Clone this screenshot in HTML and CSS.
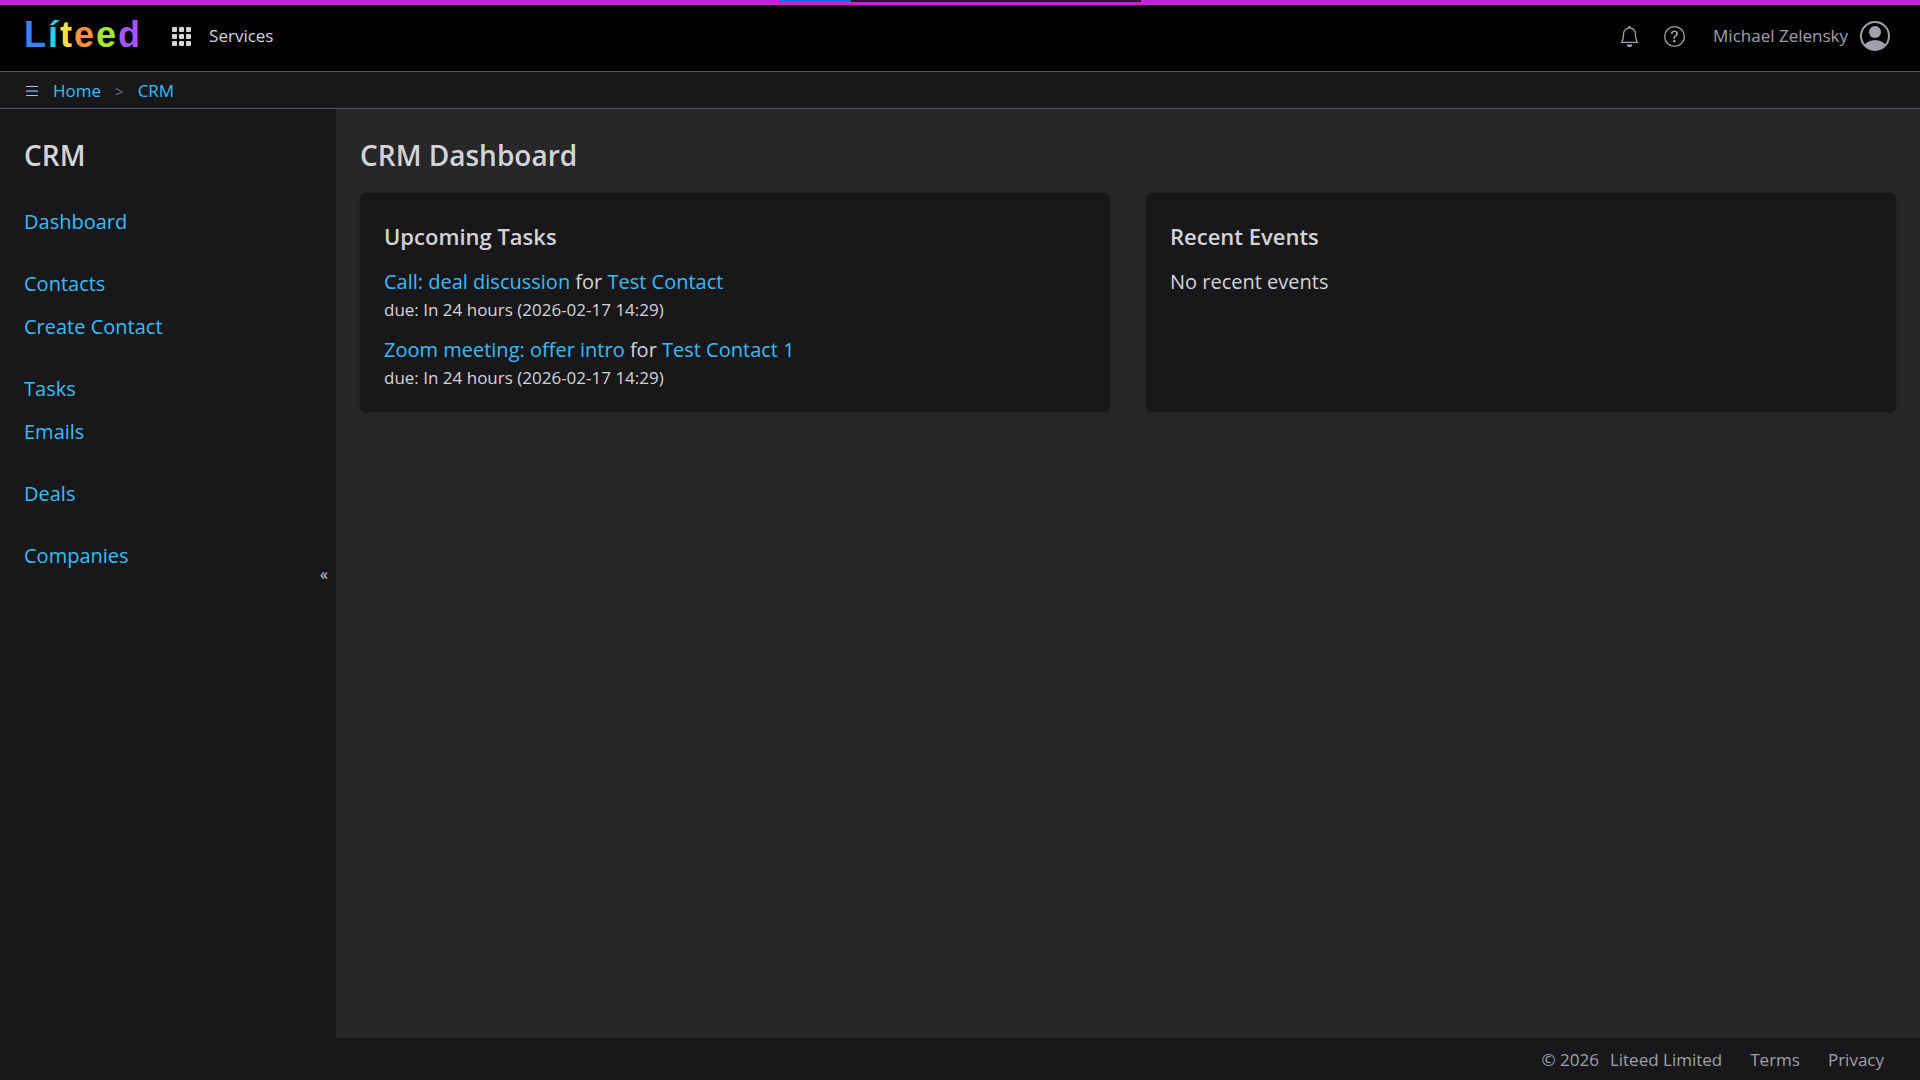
FILE: index.html
```html
<!DOCTYPE html>
<html lang="en">
<head>
    <meta charset="UTF-8">
    <meta name="viewport" content="width=device-width, initial-scale=1.0">
    <title>CRM Dashboard</title>
    <link rel="stylesheet" href="styles.css">
</head>
<body>
    <div class="progress"><span class="progress-done"></span></div>

    <header class="header">
        <a href="#" class="logo"><span class="c1">L</span><span class="c2">í</span><span class="c3">t</span><span class="c4">e</span><span class="c5">e</span><span class="c6">d</span></a>
        <a href="#" class="services">
            <svg width="19" height="19" viewBox="0 0 19 19" fill="currentColor">
                <rect x="0" y="0" width="5" height="5" rx="1"/>
                <rect x="7" y="0" width="5" height="5" rx="1"/>
                <rect x="14" y="0" width="5" height="5" rx="1"/>
                <rect x="0" y="7" width="5" height="5" rx="1"/>
                <rect x="7" y="7" width="5" height="5" rx="1"/>
                <rect x="14" y="7" width="5" height="5" rx="1"/>
                <rect x="0" y="14" width="5" height="5" rx="1"/>
                <rect x="7" y="14" width="5" height="5" rx="1"/>
                <rect x="14" y="14" width="5" height="5" rx="1"/>
            </svg>
            Services
        </a>
        <div class="header-right">
            <button type="button" class="icon-btn" aria-label="Notifications">
                <svg width="21" height="21" viewBox="0 0 16 16" fill="currentColor">
                    <path d="M8 16a2 2 0 0 0 2-2H6a2 2 0 0 0 2 2M8 1.918l-.797.161A4 4 0 0 0 4 6c0 .628-.134 2.197-.459 3.742-.16.767-.376 1.566-.663 2.258h10.244c-.287-.692-.502-1.49-.663-2.258C12.134 8.197 12 6.628 12 6a4 4 0 0 0-3.203-3.92zM14.22 12c.223.447.481.801.78 1H1c.299-.199.557-.553.78-1C2.68 10.2 3 6.88 3 6c0-2.42 1.72-4.44 4.005-4.901a1 1 0 1 1 1.99 0A5 5 0 0 1 13 6c0 .88.32 4.2 1.22 6"/>
                </svg>
            </button>
            <button type="button" class="icon-btn" aria-label="Help">
                <svg width="21" height="21" viewBox="0 0 16 16" fill="currentColor">
                    <path d="M8 15A7 7 0 1 1 8 1a7 7 0 0 1 0 14m0 1A8 8 0 1 0 8 0a8 8 0 0 0 0 16"/>
                    <path d="M5.255 5.786a.237.237 0 0 0 .241.247h.825c.138 0 .248-.113.266-.25.09-.656.54-1.134 1.342-1.134.686 0 1.314.343 1.314 1.168 0 .635-.374.927-.965 1.371-.673.489-1.206 1.06-1.168 1.987l.003.217a.25.25 0 0 0 .25.246h.811a.25.25 0 0 0 .25-.25v-.105c0-.718.273-.927 1.01-1.486.609-.463 1.244-.977 1.244-2.056 0-1.511-1.276-2.241-2.673-2.241-1.267 0-2.655.59-2.75 2.286m1.557 5.763c0 .533.425.927 1.01.927.609 0 1.028-.394 1.028-.927 0-.552-.42-.94-1.029-.94-.584 0-1.009.388-1.009.94"/>
                </svg>
            </button>
            <a href="#" class="user">
                Michael Zelensky
                <svg width="30" height="30" viewBox="0 0 30 30">
                    <clipPath id="face"><circle cx="15" cy="15" r="14"/></clipPath>
                    <circle cx="15" cy="15" r="14" fill="none" stroke="currentColor" stroke-width="2"/>
                    <circle cx="15" cy="11" r="6" fill="currentColor"/>
                    <ellipse cx="15" cy="28" rx="12" ry="9" fill="currentColor" clip-path="url(#face)"/>
                </svg>
            </a>
        </div>
    </header>

    <nav class="breadcrumbs">
        <button type="button" class="menu-btn" aria-label="Menu">
            <svg width="12" height="11" viewBox="0 0 12 11" fill="currentColor">
                <rect y="0" width="12" height="1"/>
                <rect y="4" width="12" height="2" opacity="0.6"/>
                <rect y="9" width="12" height="1"/>
            </svg>
        </button>
        <a href="#">Home</a>
        <span class="separator">&gt;</span>
        <a href="#">CRM</a>
    </nav>

    <div class="content">
        <aside class="sidebar">
            <h2>CRM</h2>
            <ul>
                <li><a href="#">Dashboard</a></li>
            </ul>
            <ul>
                <li><a href="#">Contacts</a></li>
                <li><a href="#">Create Contact</a></li>
            </ul>
            <ul>
                <li><a href="#">Tasks</a></li>
                <li><a href="#">Emails</a></li>
            </ul>
            <ul>
                <li><a href="#">Deals</a></li>
            </ul>
            <ul>
                <li><a href="#">Companies</a></li>
            </ul>
            <button type="button" class="collapse" aria-label="Collapse sidebar">«</button>
        </aside>

        <main class="main">
            <h1>CRM Dashboard</h1>
            <div class="cards">
                <section class="card">
                    <h3>Upcoming Tasks</h3>
                    <div class="task">
                        <p><a href="#">Call: deal discussion</a> for <a href="#">Test Contact</a></p>
                        <p class="due">due: In 24 hours (2026-02-17 14:29)</p>
                    </div>
                    <div class="task">
                        <p><a href="#">Zoom meeting: offer intro</a> for <a href="#">Test Contact 1</a></p>
                        <p class="due">due: In 24 hours (2026-02-17 14:29)</p>
                    </div>
                </section>
                <section class="card">
                    <h3>Recent Events</h3>
                    <p>No recent events</p>
                </section>
            </div>
        </main>
    </div>

    <footer class="footer">
        <div class="copyright"><span>© 2026</span><span>Liteed Limited</span></div>
        <a href="#">Terms</a>
        <a href="#">Privacy</a>
    </footer>
</body>
</html>
```
FILE: styles.css
```css
* {
    box-sizing: border-box;
}

body {
    margin: 0;
    min-height: 100vh;
    display: flex;
    flex-direction: column;
    font-family: "Segoe UI", "Open Sans", sans-serif;
    font-size: 20px;
    line-height: 28px;
    color: #d4d4d8;
    background-color: #18181b;
}

h1, h2, h3, p, ul {
    margin: 0;
    padding: 0;
}

h1, h2 {
    font-size: 28px;
    line-height: 44px;
    font-weight: 600;
}

h3 {
    margin-bottom: 13px;
    font-size: 22px;
    line-height: 38px;
    font-weight: 600;
}

ul {
    list-style: none;
}

a {
    color: #38bdf8;
    text-decoration: none;
}

a:hover {
    text-decoration: underline;
}

button {
    padding: 0;
    border: none;
    background: none;
    color: inherit;
    font-family: inherit;
    cursor: pointer;
}

svg {
    display: block;
}

/* loading bar over the top border */
.progress {
    position: absolute;
    top: 0;
    left: 779px;
    width: 362px;
    height: 2px;
    background-color: #1f1f1f;
}

.progress-done {
    display: block;
    width: 20%;
    height: 2px;
    background-color: #0078d7;
}

.header {
    display: flex;
    align-items: center;
    height: 72px;
    padding: 0 30px 4px 24px;
    border-top: 5px solid #c026d3;
    border-bottom: 1px solid #52525b;
    background-color: #000;
    font-size: 17px;
}

.logo {
    font-family: "Liberation Sans", Arial, sans-serif;
    font-size: 36px;
    line-height: 40px;
    font-weight: bold;
    letter-spacing: 2px;
    margin-bottom: 2px;
}

.logo:hover {
    text-decoration: none;
}

.c1 { color: #3b82f6; }
.c2 { color: #22d3ee; }
.c3 { color: #fde047; }
.c4 { color: #fb923c; }
.c5 { color: #a3e635; }
.c6 { color: #a855f7; }

.services {
    display: flex;
    align-items: center;
    gap: 18px;
    margin-left: 30px;
    color: #d4d4d8;
}

.header-right {
    display: flex;
    align-items: center;
    gap: 24px;
    margin-left: auto;
    color: #a1a1aa;
}

.user {
    display: flex;
    align-items: center;
    gap: 12px;
    margin-left: 4px;
    color: #a1a1aa;
}

.breadcrumbs {
    display: flex;
    align-items: center;
    height: 37px;
    padding: 2px 26px 0;
    border-bottom: 1px solid #52525b;
    font-size: 17px;
}

.menu-btn {
    margin-right: 15px;
    color: #93c5fd;
}

.separator {
    margin: 0 14px;
    font-size: 15px;
    color: #71717a;
}

.content {
    flex: 1;
    display: flex;
}

.sidebar {
    position: relative;
    width: 336px;
    padding: 24px;
}

.sidebar h2 {
    margin-bottom: 23px;
}

.sidebar ul {
    margin-bottom: 19px;
}

.sidebar li {
    line-height: 43px;
}

.collapse {
    position: absolute;
    top: 50%;
    right: 8px;
    transform: translateY(-50%);
    font-size: 16px;
}

.main {
    flex: 1;
    padding: 24px;
    background-color: #27272a;
}

.main h1 {
    margin-bottom: 16px;
}

.cards {
    display: grid;
    grid-template-columns: 1fr 1fr;
    gap: 36px;
}

.card {
    padding: 24px 24px 21px;
    border-radius: 5px;
    background-color: #18181b;
    box-shadow: 0 1px 3px rgba(0, 0, 0, 0.2);
}

.task + .task {
    margin-top: 13px;
}

.due {
    font-size: 17px;
    line-height: 27px;
}

.footer {
    display: flex;
    align-items: center;
    justify-content: flex-end;
    gap: 28px;
    height: 42px;
    padding: 2px 36px 0;
    font-size: 17px;
    color: #a1a1aa;
}

.footer a {
    color: #a1a1aa;
}

.copyright {
    display: flex;
    gap: 11px;
}
```
